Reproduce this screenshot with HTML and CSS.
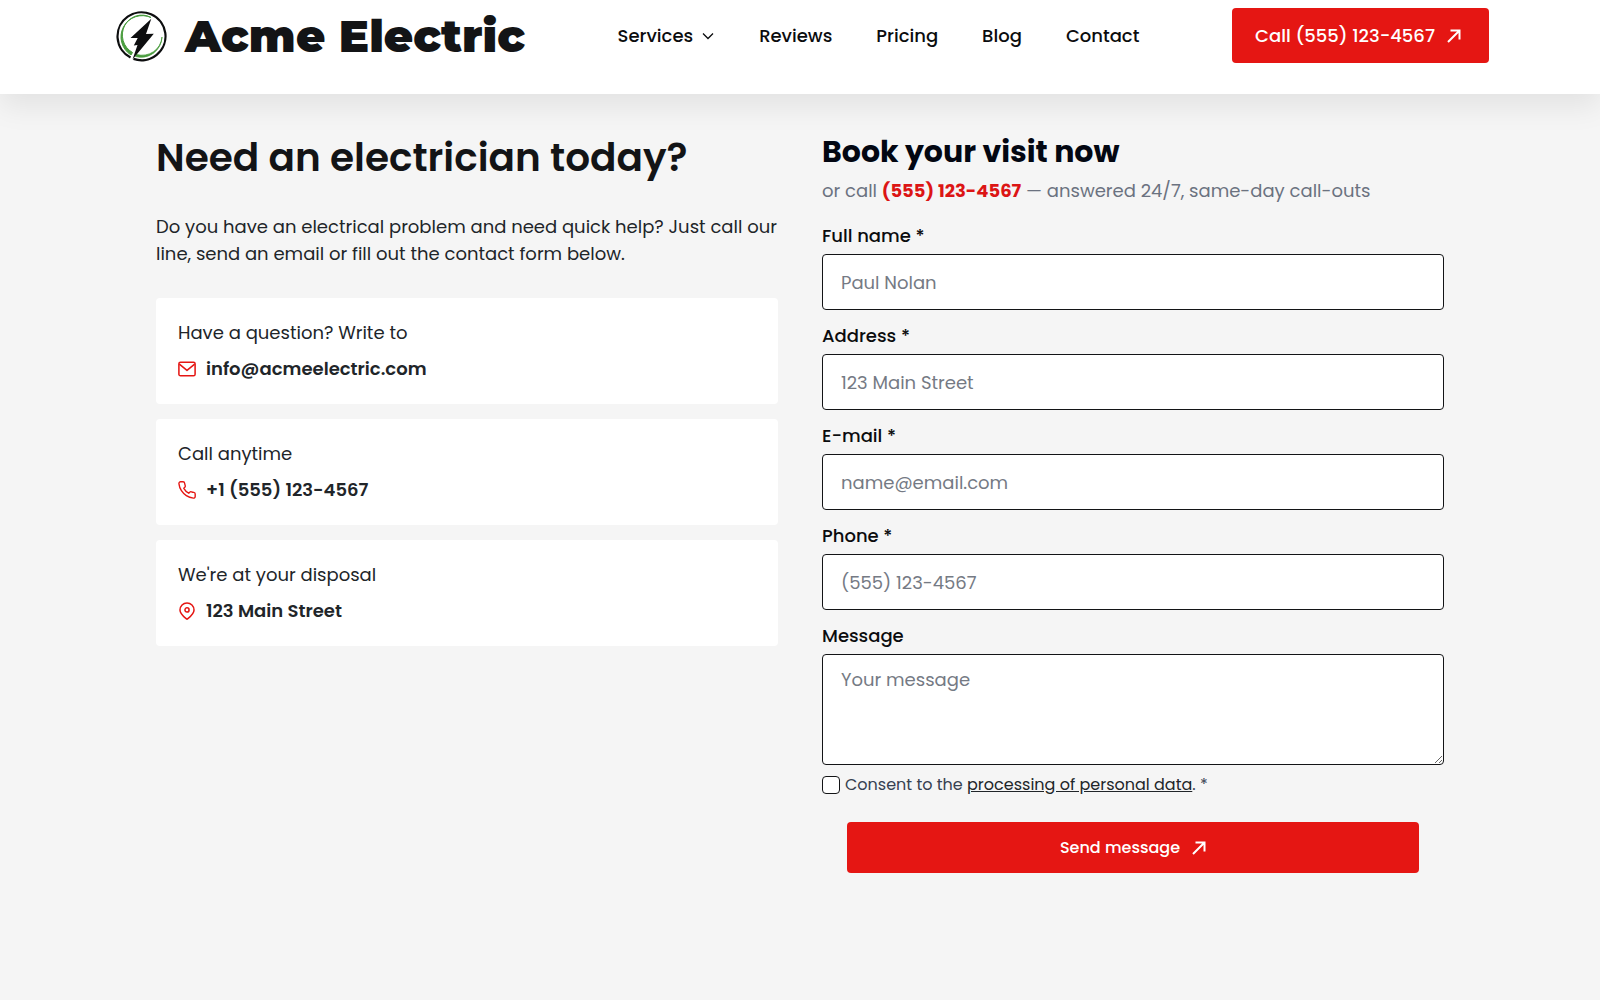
FILE: index.html
```html
<!DOCTYPE html>
<html lang="en">
<head>
<meta charset="utf-8">
<meta name="viewport" content="width=device-width, initial-scale=1">
<title>Contact – Acme Electric</title>
<link rel="stylesheet" href="styles.css">
</head>
<body>
<header class="site-header">
  <div class="header-inner">
    <a class="brand" href="#">
      <svg class="brand-mark" viewBox="0 0 52 52" aria-hidden="true">
        <path d="M15.500 47.600A24 24 0 1 1 18.500 48.900" fill="none" stroke="#0d0e0f" stroke-width="2.200"/>
        <path d="M36 7.500A21.300 21.300 0 0 0 16 45L17.500 42.500A18.500 19 0 0 1 36 7.500Z" fill="#4a9d3f" stroke="#4a9d3f"/>
        <path d="M47 27A21 21 0 0 1 20.500 46.500L21.500 44.500A20 19.500 0 0 0 47 27Z" fill="#4a9d3f" stroke="#4a9d3f" stroke-width="0.800"/>
        <path d="M36.300 8.700L15.500 28H22.700L18.800 35.500L22.500 35L17.500 49.500L38.800 23.800L31 24L36.300 8.700Z" fill="#0d0e0f"/>
      </svg>
      <span class="brand-name">Acme Electric</span>
    </a>
    <nav class="main-nav" aria-label="Main">
      <a class="nav-link" href="#">Services
        <svg class="chevron" viewBox="0 0 14 14" aria-hidden="true"><path d="M2 4.500L7 9.500L12 4.500" fill="none" stroke="currentColor" stroke-width="1.300"/></svg>
      </a>
      <a class="nav-link" href="#">Reviews</a>
      <a class="nav-link" href="#">Pricing</a>
      <a class="nav-link" href="#">Blog</a>
      <a class="nav-link" href="#">Contact</a>
    </nav>
    <a class="button button-call" href="tel:+15551234567">Call (555) 123-4567
      <svg class="arrow" viewBox="0 0 14 14" aria-hidden="true"><path d="M1 13L12 2M3.500 1.500H12.500V10.500" fill="none" stroke="currentColor" stroke-width="2"/></svg>
    </a>
  </div>
</header>
<main class="contact">
  <section class="intro">
    <h1 class="intro-title">Need an electrician today?</h1>
    <p class="intro-text">Do you have an electrical problem and need quick help? Just call our line, send an email or fill out the contact form below.</p>
    <ul class="cards">
      <li class="card">
        <span>Have a question? Write to</span>
        <a class="card-link" href="mailto:info@acmeelectric.com">
          <svg class="card-icon" viewBox="0 0 20 20" aria-hidden="true"><rect x="1" y="2.500" width="18" height="15" rx="1.800"/><path d="M1.500 4.500L10 11.500L18.500 4.500"/></svg>
          info@acmeelectric.com
        </a>
      </li>
      <li class="card">
        <span>Call anytime</span>
        <a class="card-link" href="tel:+15551234567">
          <svg class="card-icon" viewBox="1 1 22 22" aria-hidden="true"><path d="M22 16.920v3a2 2 0 0 1-2.180 2 19.790 19.790 0 0 1-8.630-3.070 19.500 19.500 0 0 1-6-6 19.790 19.790 0 0 1-3.070-8.670A2 2 0 0 1 4.110 2h3a2 2 0 0 1 2 1.720 12.840 12.840 0 0 0 .7 2.810 2 2 0 0 1-.45 2.110L8.090 9.910a16 16 0 0 0 6 6l1.270-1.270a2 2 0 0 1 2.110-.45 12.840 12.840 0 0 0 2.810.7A2 2 0 0 1 22 16.920z"/></svg>
          +1 (555) 123-4567
        </a>
      </li>
      <li class="card">
        <span>We're at your disposal</span>
        <a class="card-link" href="#">
          <svg class="card-icon" viewBox="0 0 20 20" aria-hidden="true"><path d="M17.800 8.800C17.800 13.500 12.500 17 10 19.200C7.500 17 2.200 13.500 2.200 8.800A7.800 7.800 0 0 1 17.800 8.800Z"/><circle cx="10" cy="8.800" r="2.300"/></svg>
          123 Main Street
        </a>
      </li>
    </ul>
  </section>
  <section class="booking">
    <h2 class="booking-title">Book your visit now</h2>
    <p class="booking-sub">or call <a class="booking-phone" href="tel:+15551234567">(555) 123-4567</a> — answered 24/7, same-day call-outs</p>
    <form class="form">
      <div class="field"><label for="name">Full name *</label><input class="control" id="name" type="text" placeholder="Paul Nolan" required></div>
      <div class="field"><label for="address">Address *</label><input class="control" id="address" type="text" placeholder="123 Main Street" required></div>
      <div class="field"><label for="email">E-mail *</label><input class="control" id="email" type="email" placeholder="name@email.com" required></div>
      <div class="field"><label for="phone">Phone *</label><input class="control" id="phone" type="tel" placeholder="(555) 123-4567" required></div>
      <div class="field"><label for="message">Message</label><textarea class="control control-area" id="message" placeholder="Your message"></textarea></div>
      <div class="consent">
        <input class="checkbox" id="consent" type="checkbox" required>
        <label for="consent">Consent to the <a class="consent-link" href="#">processing of personal data</a>. *</label>
      </div>
      <button class="button button-send" type="submit">Send message
        <svg class="arrow" viewBox="0 0 14 14" aria-hidden="true"><path d="M1 13L12 2M3.500 1.500H12.500V10.500" fill="none" stroke="currentColor" stroke-width="2"/></svg>
      </button>
    </form>
  </section>
</main>
</body>
</html>
```
FILE: styles.css
```css
* { box-sizing: border-box; }
body {
  margin: 0;
  background: #f5f5f5;
  color: #212529;
  font: 400 18px/27px Poppins, Inter, sans-serif;
}
h1, h2, p, ul { margin: 0; padding: 0; }
a { color: inherit; text-decoration: none; }
svg { flex: none; }

.site-header {
  padding: 8px 24px 31px;
  background: #fff;
  box-shadow: 0 12px 28px rgba(0, 0, 0, 0.08);
}
.header-inner {
  display: flex;
  align-items: center;
  justify-content: space-between;
  gap: 24px;
  max-width: 1378px;
  margin: 0 auto;
  padding-left: 4px;
}
.brand { display: flex; align-items: center; gap: 18px; }
.brand-mark { width: 52px; height: 52px; }
.brand-name {
  color: #131416;
  font: 900 45px/52px Montserrat, Inter, sans-serif;
  white-space: nowrap;
}
.main-nav { display: flex; gap: 44px; color: #0b0c0e; font-weight: 500; }
.nav-link { display: flex; align-items: center; gap: 8px; }
.chevron { width: 14px; height: 14px; }

.button {
  display: flex;
  align-items: center;
  justify-content: center;
  gap: 12px;
  border: 0;
  border-radius: 4px;
  background: #e51613;
  color: #fff;
  font-family: inherit;
  font-weight: 500;
  white-space: nowrap;
  cursor: pointer;
}
.button-call { height: 55px; padding: 0 28px 0 23px; }
.arrow { width: 14px; height: 14px; }

.contact {
  display: grid;
  grid-template-columns: repeat(auto-fit, minmax(min(100%, 480px), 1fr));
  gap: 44px;
  max-width: 1336px;
  margin: 0 auto;
  padding: 36px 24px 48px;
}
.intro-title {
  color: #131416;
  font-size: 39px;
  font-weight: 600;
  line-height: 56px;
}
.intro-text { margin-top: 27px; }
.cards { display: grid; gap: 15px; margin-top: 31px; list-style: none; }
.card {
  display: grid;
  gap: 9px;
  padding: 21px 22px 22px;
  border-radius: 4px;
  background: #fff;
}
.card-link { display: flex; align-items: center; gap: 10px; font-weight: 600; }
.card-icon {
  width: 18px;
  height: 18px;
  fill: none;
  stroke: #e51613;
  stroke-width: 1.7;
  stroke-linejoin: round;
}

.booking-title {
  color: #030712;
  font-size: 30px;
  font-weight: 700;
  line-height: 44px;
}
.booking-sub { margin-top: 3px; color: #6b7280; }
.booking-phone { color: #dc1515; font-weight: 700; }
.form { display: grid; gap: 11px; margin-top: 17px; }
.field { display: grid; gap: 3px; color: #0b0c0e; font-weight: 500; }
.field label { line-height: 30px; }
.control {
  width: 100%;
  height: 56px;
  padding: 0 18px;
  border: 1px solid #131416;
  border-radius: 4px;
  background: #fff;
  color: #131416;
  font: 400 18px/27px Poppins, Inter, sans-serif;
}
.control::placeholder { color: #757a84; opacity: 1; }
.control-area { display: block; height: 111px; padding: 11px 18px; resize: vertical; }
.consent {
  display: flex;
  align-items: center;
  gap: 5px;
  color: #374151;
  font-size: 16px;
  line-height: 18px;
}
.checkbox {
  appearance: none;
  width: 18px;
  height: 18px;
  margin: 0;
  border: 1px solid #131416;
  border-radius: 4px;
  background: #fff;
}
.checkbox:checked { background: #e51613; }
.consent-link { color: #212529; text-decoration: underline; }
.button-send {
  height: 51px;
  margin: 17px 25px 0;
  font-size: 16px;
}
```
